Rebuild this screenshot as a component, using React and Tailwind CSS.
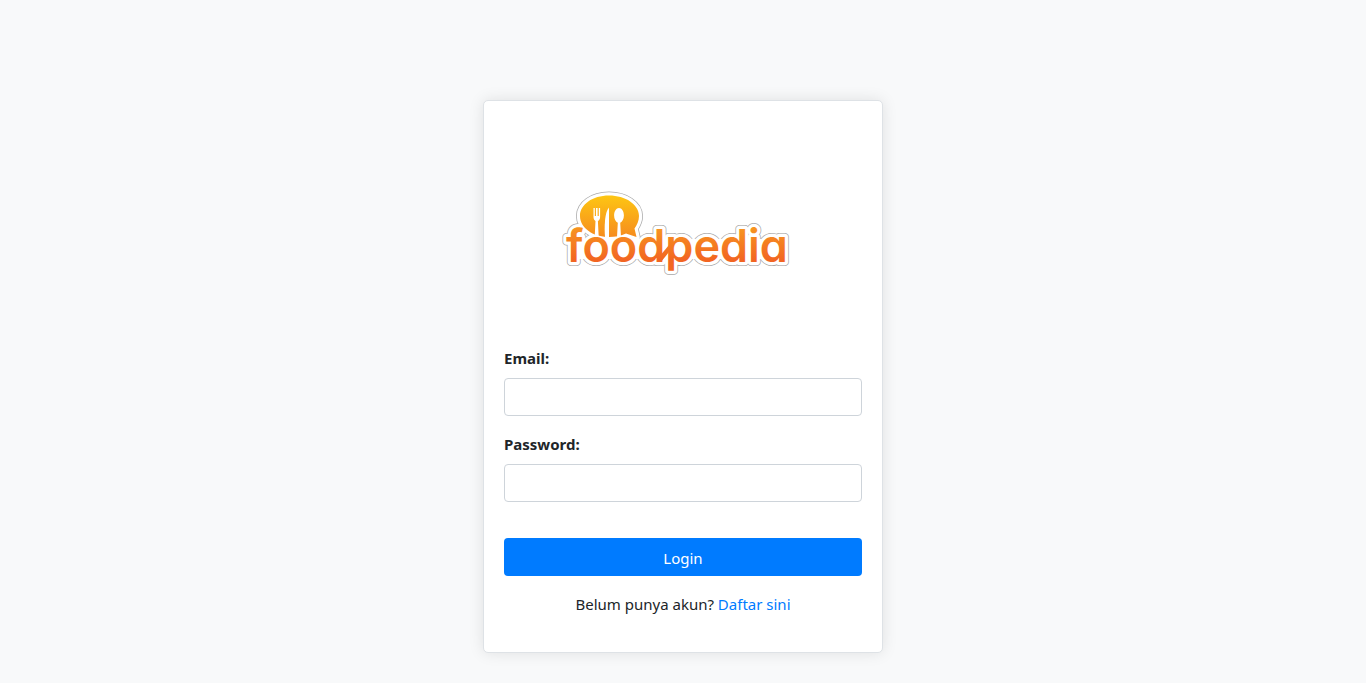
function Wordmark(props) {
  return (
    <text
      x="11"
      y="80"
      fontFamily="Inter, 'Liberation Sans', sans-serif"
      fontSize="45"
      fontWeight="600"
      strokeLinejoin="round"
      style={{ fontFeatureSettings: '"cv11"', fontOpticalSizing: "none" }}
      {...props}
    >
      foodpedia
    </text>
  );
}

const BUBBLE =
  "M54 13.500C70.500 13.500 84 22.500 84 34C84 39 82 43 79.500 46.500L81.500 55L71 51.500C66 54 60 55 54 55C37.500 55 25 45.500 25 34C25 22.500 37.500 13.500 54 13.500Z";

function Logo() {
  return (
    <svg viewBox="0 0 256 104" className="h-26 w-64" role="img" aria-label="foodpedia">
      <defs>
        <linearGradient id="bubble" gradientUnits="userSpaceOnUse" x1="0" y1="14" x2="0" y2="56">
          <stop offset="0" stopColor="#fdc513" />
          <stop offset="1" stopColor="#f68b1f" />
        </linearGradient>
        <linearGradient id="letters" gradientUnits="userSpaceOnUse" x1="0" y1="46" x2="0" y2="92">
          <stop offset="0" stopColor="#f79420" />
          <stop offset="0.700" stopColor="#f26522" />
          <stop offset="1" stopColor="#f26522" />
        </linearGradient>
      </defs>
      <path d={BUBBLE} fill="#aaa" stroke="#aaa" strokeWidth="8" strokeLinejoin="round" />
      <Wordmark fill="#aaa" stroke="#aaa" strokeWidth="8" />
      <path d={BUBBLE} fill="#fff" stroke="#fff" strokeWidth="6.500" strokeLinejoin="round" />
      <Wordmark fill="#fff" stroke="#fff" strokeWidth="6.500" />
      <path d="M20 67H226" stroke="#fff" strokeWidth="20" />
      <path d={BUBBLE} fill="url(#bubble)" />
      <g fill="#fff">
        <path d="M38.500 26h1.300v8h1.200v-8h1.600v8h1.200v-8h1.300v9c0 2-1 3.500-2.200 4l.8 16h-4l.8-16c-1.200-.8-2-2-2-4z" />
        <path d="M54 25.500V55h-4c-.8-9-.5-25 4-29.500z" />
        <path d="M64 26c2.800 0 4.900 3.300 4.900 7.500 0 3.500-1.600 6.300-3.700 7.200L66 55h-4l.8-14.300c-2.100-.9-3.700-3.700-3.700-7.200 0-4.200 2.100-7.500 4.900-7.500z" />
      </g>
      <Wordmark fill="#fff" stroke="#fff" strokeWidth="2" />
      <Wordmark fill="url(#letters)" />
      <path d="M104 75L114 63V70L106 80H104Z" fill="url(#letters)" />
    </svg>
  );
}

function Field({ id, label, type }) {
  return (
    <div className="mb-4">
      <label htmlFor={id} className="mb-2 block font-bold">
        {label}
      </label>
      <input
        id={id}
        name={id}
        type={type}
        className="block h-9.5 w-full rounded-sm border border-[#ced4da] bg-white px-3 outline-none focus:border-[#80bdff]"
      />
    </div>
  );
}

export default function App() {
  return (
    <div className="min-h-screen bg-[#f8f9fa] px-4 pt-25 pb-7.5 font-['Noto_Sans',sans-serif] text-[15px] leading-6 text-[#212529]">
      <main className="mx-auto max-w-100 rounded-[5px] border border-[#dee2e6] bg-white p-5 shadow-[0_0_15px_rgba(0,0,0,0.1)]">
        <div className="flex h-[225px] items-center justify-center">
          <Logo />
        </div>
        <form onSubmit={(event) => event.preventDefault()}>
          <Field id="email" label="Email:" type="email" />
          <Field id="password" label="Password:" type="password" />
          <button
            type="submit"
            className="mt-9 block h-9.5 w-full cursor-pointer rounded-sm bg-[#007bff] pt-0.5 text-white hover:bg-[#0069d9]"
          >
            Login
          </button>
        </form>
        <p className="my-4 text-center">
          Belum punya akun?{" "}
          <a href="#daftar" className="text-[#007bff] hover:underline">
            Daftar sini
          </a>
        </p>
      </main>
    </div>
  );
}
